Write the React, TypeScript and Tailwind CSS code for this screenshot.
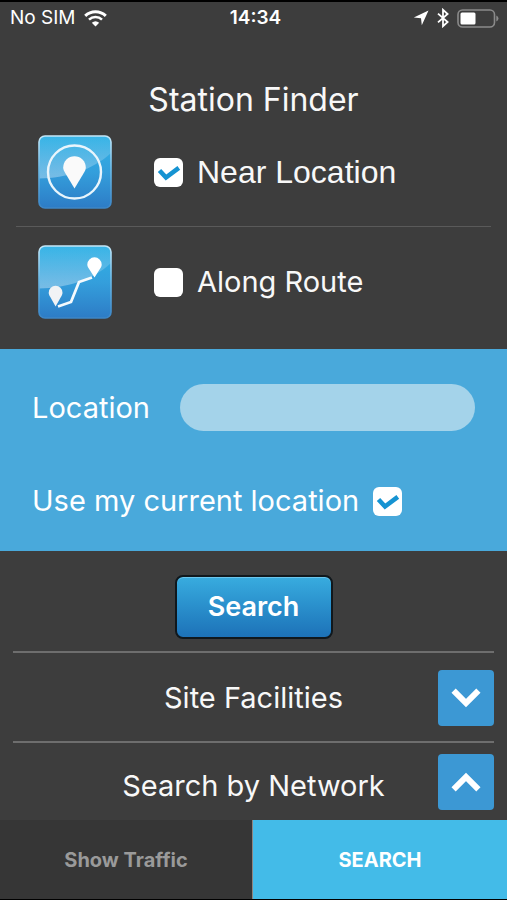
import { useId, useState, type ReactNode } from "react";

function StatusBar() {
  return (
    <header className="grid h-8 grid-cols-3 items-center px-2 text-[19px] leading-6 text-white">
      <div className="flex items-center gap-2 pl-0.5">
        <span>No SIM</span>
        <svg viewBox="0 0 23 17" className="h-[17px] w-[23px]" fill="none" aria-hidden="true">
          <path d="M1.2 5.8a15 15 0 0 1 20.6 0" stroke="#fff" strokeWidth="3" />
          <path d="M5 9.6a9.6 9.6 0 0 1 13 0" stroke="#fff" strokeWidth="2.6" />
          <path d="M7.8 12.8a5.6 5.6 0 0 1 7.4 0L11.5 16.6z" fill="#fff" />
        </svg>
      </div>
      <time className="pl-1 text-center font-semibold">14:34</time>
      <div className="flex items-center justify-end gap-2">
        <svg viewBox="0 0 16 16" className="size-4" aria-hidden="true">
          <path d="M15.5 .5 8.8 15.2 8 8.2.8 7.4z" fill="#fff" />
        </svg>
        <svg viewBox="0 0 12 20" className="h-5 w-3" fill="none" aria-hidden="true">
          <path d="M1 5.600 10.600 14 6 18.200V1.800L10.600 6 1 14.400" stroke="#fff" strokeWidth="1.800" />
        </svg>
        <svg viewBox="0 0 42 19" className="h-[19px] w-[42px]" fill="none" aria-hidden="true">
          <rect x="1" y="1" width="36.5" height="17" rx="4.5" stroke="#8a8a8a" strokeWidth="1.6" />
          <rect x="3.5" y="3.5" width="15" height="12" rx="1.5" fill="#fff" />
          <path d="M39.3 6.5q2.2 1 2.2 3t-2.2 3z" fill="#8a8a8a" />
        </svg>
      </div>
    </header>
  );
}

function TileFrame({ id, children }: { id: string; children: ReactNode }) {
  return (
    <svg viewBox="0 0 74 74" className="size-[74px] shrink-0" fill="none" aria-hidden="true">
      <defs>
        <linearGradient id={id + "base"} x1="0" y1="0" x2="0" y2="1">
          <stop offset="0" stopColor="#2fb2e6" />
          <stop offset=".5" stopColor="#349fdc" />
          <stop offset="1" stopColor="#2d7cc6" />
        </linearGradient>
        <linearGradient id={id + "gloss"} x1="0" y1="0" x2="0" y2="1">
          <stop offset="0" stopColor="#fff" stopOpacity=".04" />
          <stop offset="1" stopColor="#fff" stopOpacity=".34" />
        </linearGradient>
        <linearGradient id={id + "edge"} x1="0" y1="0" x2="0" y2="1">
          <stop offset="0" stopColor="#c4e6f7" />
          <stop offset=".45" stopColor="#6dbbe8" />
          <stop offset="1" stopColor="#3c86c6" />
        </linearGradient>
      </defs>
      <rect x="1" y="1" width="72" height="72" rx="6" fill={"url(#" + id + "base)"} />
      <path d="M1 43.5C28 43 55 35 73 18V7a6 6 0 0 0-6-6H7a6 6 0 0 0-6 6z" fill={"url(#" + id + "gloss)"} />
      <rect x="1" y="1" width="72" height="72" rx="6" stroke={"url(#" + id + "edge)"} strokeWidth="1.6" />
      {children}
    </svg>
  );
}

function NearIcon() {
  return (
    <TileFrame id="near">
      <circle cx="36.5" cy="37" r="26.5" stroke="#e9f5fc" strokeWidth="2.4" />
      <path d="M36.500 53.500 27.500 38.500C26 36 25.200 34.500 25.200 32.500a11.300 11.300 0 0 1 22.600 0C47.800 34.500 47 36 45.500 38.500z" fill="#fafafa" />
    </TileFrame>
  );
}

function RouteIcon() {
  return (
    <TileFrame id="route">
      <path d="M20 61.500 33 57 41 37l13-4.500" stroke="#f4fafd" strokeWidth="2.800" />
      <path d="M17.600 61.500 12.300 52C11.300 50.300 10.700 49.300 10.700 47.700a6.900 6.900 0 0 1 13.800 0C24.500 49.300 23.900 50.300 22.900 52z" fill="#f1f3f5" />
      <path d="M56.500 32.500 50.800 23.500C49.800 21.900 49.300 21 49.300 19.500a7.200 7.200 0 0 1 14.400 0C63.700 21 63.200 21.900 62.200 23.500z" fill="#fff" />
    </TileFrame>
  );
}

type CheckBoxProps = { id: string; checked: boolean; onChange: (value: boolean) => void };

function CheckBox({ id, checked, onChange }: CheckBoxProps) {
  return (
    <span className="grid size-[29px] shrink-0">
      <input
        id={id}
        type="checkbox"
        checked={checked}
        onChange={(event) => onChange(event.target.checked)}
        className="peer col-start-1 row-start-1 size-full appearance-none rounded-md bg-white"
      />
      <svg
        viewBox="0 0 29 29"
        className="pointer-events-none invisible col-start-1 row-start-1 size-full peer-checked:visible"
        fill="none"
        aria-hidden="true"
      >
        <path d="M5.500 12.500l6.500 7L24.800 9.800" stroke="#1593d2" strokeWidth="4.600" />
      </svg>
    </span>
  );
}

type ModeRowProps = CheckBoxProps & { icon: ReactNode; label: string; font: string };

function ModeRow({ icon, label, font, ...box }: ModeRowProps) {
  return (
    <div className="flex items-center pl-[38px]">
      {icon}
      <div className="flex items-center gap-3.5 pl-[42px]">
        <CheckBox {...box} />
        <label htmlFor={box.id} className={font}>
          {label}
        </label>
      </div>
    </div>
  );
}

type ExpandRowProps = { label: string; open: boolean; className?: string };

function ExpandRow({ label, open: initial, className }: ExpandRowProps) {
  const [open, setOpen] = useState(initial);
  return (
    <div className="grid grid-cols-[56px_1fr_56px] items-center">
      <h2 className={"col-start-2 text-center text-[29px] leading-9 " + (className ?? "")}>{label}</h2>
      <button
        type="button"
        aria-label={label}
        aria-expanded={open}
        onClick={() => setOpen(!open)}
        className="grid size-14 place-items-center rounded-sm bg-[#3c98d4]"
      >
        <svg viewBox="0 0 30 20" className="h-5 w-[30px]" fill="none" aria-hidden="true">
          <path d={open ? "M2.600 17.400 15 5l12.400 12.400" : "M2.600 2.600 15 15 27.400 2.600"} stroke="#fff" strokeWidth="6" />
        </svg>
      </button>
    </div>
  );
}

export default function App() {
  const id = useId();
  const [mode, setMode] = useState("near");
  const [current, setCurrent] = useState(true);

  return (
    <div className="flex min-h-screen flex-col border-y border-t-2 border-black bg-[#3d3d3d] font-['Inter','Liberation_Sans',sans-serif] text-[#f8f8f8]">
      <StatusBar />
      <main className="flex grow flex-col">
        <section className="pb-[30px]">
          <h1 className="pt-12 pb-[17px] text-center text-[32px] leading-9">Station Finder</h1>
          <ModeRow
            id={id + "near"}
            icon={<NearIcon />}
            label="Near Location"
            font="font-['Liberation_Sans',sans-serif] text-[32px] leading-9"
            checked={mode === "near"}
            onChange={() => setMode("near")}
          />
          <hr className="mx-4 mt-[17px] mb-[18px] border-[#5a5a5a]" />
          <ModeRow
            id={id + "route"}
            icon={<RouteIcon />}
            label="Along Route"
            font="text-[29px] leading-9"
            checked={mode === "route"}
            onChange={() => setMode("route")}
          />
        </section>

        <section className="bg-[#49a9db] px-8 pt-[35px] pb-8 text-white">
          <div className="flex items-center gap-[30px]">
            <label htmlFor={id + "location"} className="text-[29px] leading-9">
              Location
            </label>
            <input
              id={id + "location"}
              type="text"
              className="h-[47px] min-w-0 grow rounded-full bg-[#a4d3ea] px-5 text-2xl text-[#2b5f7d] outline-none"
            />
          </div>
          <div className="flex items-center gap-3.5 pt-[52px]">
            <label htmlFor={id + "current"} className="text-[29px] leading-9">
              Use my current location
            </label>
            <CheckBox id={id + "current"} checked={current} onChange={setCurrent} />
          </div>
        </section>

        <section className="px-[13px] pt-6 pb-2.5">
          <div className="flex justify-center pb-3">
            <button
              type="button"
              className="h-16 w-[158px] rounded-lg border-2 border-[#10181d] bg-linear-to-b from-[#38acdf] to-[#1d72b8] text-[27px] font-semibold text-white inset-shadow-[0_1px_0_#6cc6ec]"
            >
              Search
            </button>
          </div>
          <hr className="mb-[17px] border-t-2 border-[#6e6e6e]" />
          <ExpandRow label="Site Facilities" open={false} />
          <hr className="mt-[15px] mb-[11px] border-t-2 border-[#6e6e6e]" />
          <ExpandRow label="Search by Network" open={true} className="pt-2" />
        </section>
      </main>

      <footer className="grid h-[79px] grid-cols-[252fr_255fr] text-xl font-bold">
        <button type="button" className="bg-[#363636] text-[#9a9a9a]">
          Show Traffic
        </button>
        <button type="button" className="border-l border-[#8d8580] bg-[#43bbe8] text-white">
          SEARCH
        </button>
      </footer>
    </div>
  );
}
